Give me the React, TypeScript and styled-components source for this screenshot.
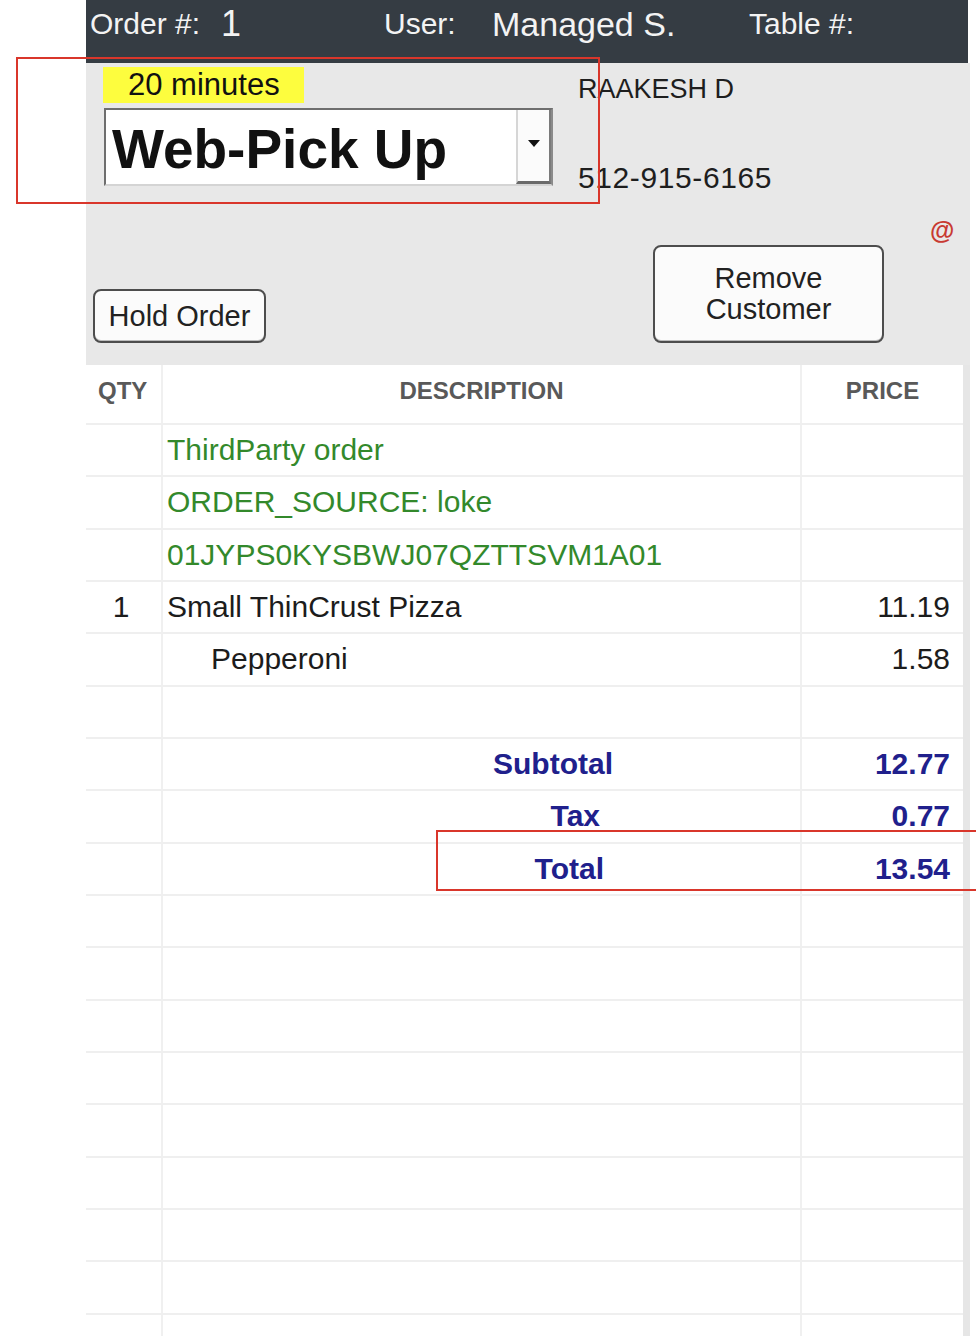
import React from "react";
import styled, { createGlobalStyle } from "styled-components";

const GlobalStyle = createGlobalStyle`
  html, body { margin: 0; padding: 0; background: #ffffff; }
  body { font-family: "Liberation Sans", Arial, sans-serif; }
`;

const Page = styled.div`
  position: relative;
  width: 976px;
  height: 1336px;
  overflow: hidden;
  background: #ffffff;
`;

const Panel = styled.div`
  margin-left: 86px;
  width: 884px;
  display: flex;
  flex-direction: column;
`;

const TopBar = styled.div`
  height: 63px;
  box-sizing: border-box;
  padding-bottom: 16px;
  margin-right: 2px;
  background: #353c43;
  display: flex;
  align-items: center;
  color: #f3f3f3;
  line-height: 1;
`;

const BarSlot = styled.span<{ $w?: number; $size: number; $ml?: number }>`
  flex: 0 0 ${(p) => (p.$w ? `${p.$w}px` : "auto")};
  margin-left: ${(p) => p.$ml ?? 0}px;
  font-size: ${(p) => p.$size}px;
  white-space: nowrap;
`;

const Header = styled.div`
  height: 302px;
  box-sizing: border-box;
  background: #e8e8e8;
  display: flex;
  flex-direction: column;
  padding-bottom: 22px;
`;

const TopRow = styled.div`
  display: flex;
  gap: 25px;
`;

const LeftBlock = styled.div`
  display: flex;
  flex-direction: column;
  align-items: flex-start;
  padding: 4px 0 0 17px;
  width: 450px;
`;

const Badge = styled.div`
  height: 36px;
  box-sizing: border-box;
  padding: 0 24px 0 25px;
  background: #fdfd3e;
  color: #111;
  font-size: 31px;
  line-height: 36px;
`;

const SelectBox = styled.div`
  margin-top: 5px;
  margin-left: 1px;
  width: 449px;
  height: 78px;
  box-sizing: border-box;
  background: #ffffff;
  border-style: solid;
  border-width: 2px;
  border-color: #6e6e6e #8a8a8a #d4d4d4 #6e6e6e;
  display: flex;
  align-items: stretch;
`;

const SelectValue = styled.div`
  flex: 1;
  padding: 4px 0 0 6px;
  display: flex;
  align-items: center;
  font-size: 55px;
  font-weight: 700;
  color: #111;
`;

const DropButton = styled.div`
  width: 35px;
  box-sizing: border-box;
  border-left: 2px solid #d6d6d6;
  border-bottom: 3px solid #6a6a6a;
  border-right: 2px solid #7a7a7a;
  background: #fbfbfb;
  display: flex;
  align-items: center;
  justify-content: center;
  padding-bottom: 4px;
`;

const RightBlock = styled.div`
  display: flex;
  flex-direction: column;
  padding-top: 13px;
  color: #1e1e1e;
  line-height: 1;
`;

const CustomerName = styled.div`
  font-size: 27px;
`;

const CustomerPhone = styled.div`
  margin-top: 60px;
  font-size: 30px;
  letter-spacing: 0.6px;
`;

const BottomRow = styled.div`
  margin-top: auto;
  display: flex;
  align-items: flex-end;
`;

const PosButton = styled.div<{ $w: number; $h: number; $ml: number }>`
  width: ${(p) => p.$w}px;
  height: ${(p) => p.$h}px;
  margin-left: ${(p) => p.$ml}px;
  box-sizing: border-box;
  border: 2px solid #4d4d4d;
  border-radius: 8px;
  background: #fbfbfb;
  box-shadow: inset 0 -1px 0 #bdbdbd;
  display: flex;
  flex-direction: column;
  align-items: center;
  justify-content: center;
  color: #222;
  font-size: 29px;
  line-height: 31px;
  text-align: center;
`;

const AtMark = styled.span`
  margin-left: 46px;
  margin-bottom: 101px;
  color: #c83a32;
  font-size: 25px;
  font-weight: 700;
  line-height: 24px;
`;

const Table = styled.div`
  display: flex;
  flex-direction: column;
  background: #ffffff;
  border-right: 7px solid #e6e6e6;
`;

const Row = styled.div<{ $h: number }>`
  display: grid;
  grid-template-columns: 77px 639px 161px;
  height: ${(p) => p.$h}px;
  box-sizing: border-box;
  border-bottom: 2px solid #efefef;
  flex: 0 0 auto;
`;

const Cell = styled.div<{
  $align?: "left" | "center" | "right";
  $pl?: number;
  $pr?: number;
  $divider?: boolean;
}>`
  display: flex;
  align-items: center;
  justify-content: ${(p) =>
    p.$align === "center" ? "center" : p.$align === "right" ? "flex-end" : "flex-start"};
  padding-left: ${(p) => p.$pl ?? 0}px;
  padding-right: ${(p) => p.$pr ?? 0}px;
  border-right: ${(p) => (p.$divider ? "2px solid #f0f0f0" : "none")};
  box-sizing: border-box;
  white-space: nowrap;
  overflow: hidden;
`;

const HeadText = styled.span`
  font-weight: 700;
  font-size: 24px;
  color: #595959;
  margin-bottom: 6px;
`;

const ItemText = styled.span<{ $tone: "green" | "black" | "navy" }>`
  font-size: 30px;
  font-weight: ${(p) => (p.$tone === "navy" ? 700 : 400)};
  color: ${(p) =>
    p.$tone === "green" ? "#33892b" : p.$tone === "navy" ? "#20208c" : "#1c1c1c"};
`;

const Annotation = styled.div<{ $l: number; $t: number; $w: number; $h: number }>`
  position: absolute;
  left: ${(p) => p.$l}px;
  top: ${(p) => p.$t}px;
  width: ${(p) => p.$w}px;
  height: ${(p) => p.$h}px;
  box-sizing: border-box;
  border: 2px solid #d9362b;
  pointer-events: none;
`;

type Line = {
  kind: "note" | "item" | "mod" | "total" | "blank";
  qty?: string;
  desc?: string;
  price?: string;
  pr?: number;
};

const lines: Line[] = [
  { kind: "note", desc: "ThirdParty order" },
  { kind: "note", desc: "ORDER_SOURCE: loke" },
  { kind: "note", desc: "01JYPS0KYSBWJ07QZTTSVM1A01" },
  { kind: "item", qty: "1", desc: "Small ThinCrust Pizza", price: "11.19" },
  { kind: "mod", desc: "Pepperoni", price: "1.58" },
  { kind: "blank" },
  { kind: "total", desc: "Subtotal", price: "12.77", pr: 187 },
  { kind: "total", desc: "Tax", price: "0.77", pr: 200 },
  { kind: "total", desc: "Total", price: "13.54", pr: 196 },
  ...Array.from({ length: 10 }, () => ({ kind: "blank" as const })),
];

const ROW_H = 52.33;

function LineRow({ line }: { line: Line }) {
  const tone = line.kind === "note" ? "green" : line.kind === "total" ? "navy" : "black";
  const descAlign = line.kind === "total" ? "right" : "left";
  const descPl = line.kind === "mod" ? 48 : 4;
  return (
    <Row $h={ROW_H}>
      <Cell $align="center" $pr={5} $divider>
        {line.qty && <ItemText $tone="black">{line.qty}</ItemText>}
      </Cell>
      <Cell $align={descAlign} $pl={descPl} $pr={line.pr ?? 0} $divider>
        {line.desc && <ItemText $tone={tone}>{line.desc}</ItemText>}
      </Cell>
      <Cell $align="right" $pr={13}>
        {line.price && <ItemText $tone={tone}>{line.price}</ItemText>}
      </Cell>
    </Row>
  );
}

export default function App() {
  return (
    <Page>
      <GlobalStyle />
      <Panel>
        <TopBar>
          <BarSlot $ml={4} $w={131} $size={30}>Order #:</BarSlot>
          <BarSlot $w={163} $size={36}>1</BarSlot>
          <BarSlot $w={108} $size={30}>User:</BarSlot>
          <BarSlot $w={257} $size={34}>Managed S.</BarSlot>
          <BarSlot $size={30}>Table #:</BarSlot>
        </TopBar>

        <Header>
          <TopRow>
            <LeftBlock>
              <Badge>20 minutes</Badge>
              <SelectBox>
                <SelectValue>Web-Pick Up</SelectValue>
                <DropButton>
                  <svg width="12" height="7" viewBox="0 0 12 7">
                    <path d="M0 0 H12 L6 7 Z" fill="#111" />
                  </svg>
                </DropButton>
              </SelectBox>
            </LeftBlock>
            <RightBlock>
              <CustomerName>RAAKESH D</CustomerName>
              <CustomerPhone>512-915-6165</CustomerPhone>
            </RightBlock>
          </TopRow>
          <BottomRow>
            <PosButton $w={173} $h={54} $ml={7}>Hold Order</PosButton>
            <PosButton $w={231} $h={98} $ml={387}>
              <span>Remove</span>
              <span>Customer</span>
            </PosButton>
            <AtMark>@</AtMark>
          </BottomRow>
        </Header>

        <Table>
          <Row $h={60}>
            <Cell $align="left" $pl={12} $divider>
              <HeadText>QTY</HeadText>
            </Cell>
            <Cell $align="center" $divider>
              <HeadText>DESCRIPTION</HeadText>
            </Cell>
            <Cell $align="center">
              <HeadText>PRICE</HeadText>
            </Cell>
          </Row>
          {lines.map((line, i) => (
            <LineRow key={i} line={line} />
          ))}
        </Table>
      </Panel>

      <Annotation $l={16} $t={57} $w={584} $h={147} />
      <Annotation $l={436} $t={830} $w={560} $h={61} />
    </Page>
  );
}
